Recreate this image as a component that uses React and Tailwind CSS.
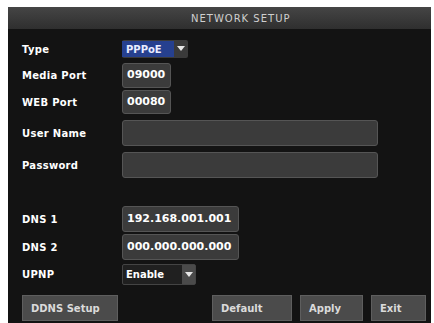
import React from 'react'

const font = { fontFamily: '"DejaVu Sans", "Liberation Sans", sans-serif' }

function Label({ children }) {
  return <div className="w-[100px] shrink-0 text-[10px] font-bold tracking-[0.3px] text-white">{children}</div>
}

function Box({ w, h = 'h-[25px]', children }) {
  return (
    <div
      className={`${w} ${h} flex items-center overflow-hidden whitespace-nowrap rounded-[3px] border border-[#555] bg-[#3b3b3b] px-[4px] text-[11px] font-bold text-white`}
    >
      {children}
    </div>
  )
}

function Arrow() {
  return (
    <svg width="8" height="6" viewBox="0 0 8 6">
      <path d="M0 0 L8 0 L4 5 Z" fill="#e6e6e6" />
    </svg>
  )
}

function Row({ label, mt, children }) {
  return (
    <div className={`flex items-center ${mt}`}>
      <Label>{label}</Label>
      {children}
    </div>
  )
}

function Btn({ w, children }) {
  return (
    <button className={`${w} h-[26px] border border-[#5e5e5e] bg-[#4b4b4b] text-left pl-[8px] text-[10px] font-bold text-[#dadada]`}>
      {children}
    </button>
  )
}

export default function App() {
  return (
    <div className="h-[323px] w-[434px] bg-white pl-[8px] pt-[7px]" style={font}>
      <div className="flex h-[316px] w-[423px] flex-col bg-[#131313]">
        <div className="flex h-[22px] items-center bg-gradient-to-b from-[#454545] to-[#2f2f2f] pl-[183px] text-[10px] tracking-[1px] text-[#cfcfcf]">
          NETWORK SETUP
        </div>
        <div className="flex flex-col pl-[14px]">
          <Row label="Type" mt="mt-[11px]">
            <div className="flex h-[18px] items-center rounded-[2px] bg-[#3a3a3a]">
              <div className="flex h-[16px] w-[52px] items-center bg-[#26408f] pl-[4px] text-[10px] font-bold text-[#e8ecff]">
                PPPoE
              </div>
              <div className="flex w-[14px] justify-center"><Arrow /></div>
            </div>
          </Row>
          <Row label="Media Port" mt="mt-[5px]">
            <Box w="w-[49px]">09000</Box>
          </Row>
          <Row label="WEB Port" mt="mt-[2px]">
            <Box w="w-[49px]" h="h-[24px]">00080</Box>
          </Row>
          <Row label="User Name" mt="mt-[6px]">
            <Box w="w-[256px]" h="h-[26px]" />
          </Row>
          <Row label="Password" mt="mt-[6px]">
            <Box w="w-[256px]" h="h-[26px]" />
          </Row>
          <Row label="DNS 1" mt="mt-[28px]">
            <Box w="w-[117px]" h="h-[26px]">192.168.001.001</Box>
          </Row>
          <Row label="DNS 2" mt="mt-[2px]">
            <Box w="w-[117px]" h="h-[26px]">000.000.000.000</Box>
          </Row>
          <Row label="UPNP" mt="mt-[4px]">
            <div className="flex h-[21px] w-[74px] items-center rounded-[2px] border border-[#444] bg-[#202020]">
              <div className="flex-1 pl-[3px] text-[10px] font-bold text-white">Enable</div>
              <div className="flex h-full w-[13px] items-center justify-center bg-[#4a4a4a]"><Arrow /></div>
            </div>
          </Row>
          <div className="mt-[10px] flex items-center">
            <Btn w="w-[96px]">DDNS Setup</Btn>
            <div className="flex-1" />
            <Btn w="w-[80px]">Default</Btn>
            <div className="w-[8px]" />
            <Btn w="w-[63px]">Apply</Btn>
            <div className="w-[8px]" />
            <Btn w="w-[55px]">Exit</Btn>
            <div className="w-[5px]" />
          </div>
        </div>
      </div>
    </div>
  )
}
